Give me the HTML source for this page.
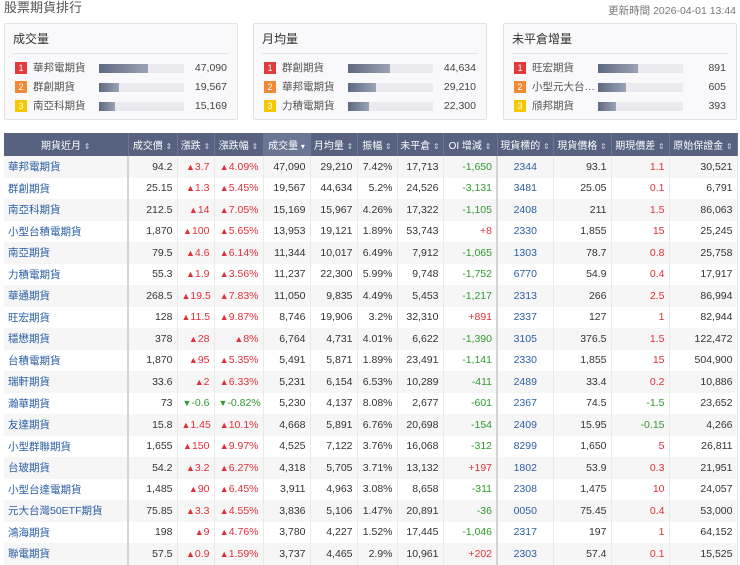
<!DOCTYPE html>
<html><head><meta charset="utf-8"><style>
*{box-sizing:border-box;margin:0;padding:0}
body{width:740px;height:565px;overflow:hidden;background:#fff;font-family:"Liberation Sans","Noto Sans CJK TC",sans-serif;color:#333;position:relative}
.title{position:absolute;left:4px;top:0;font-size:13px;color:#555;line-height:16px}
.upd{position:absolute;right:4px;top:3px;font-size:10.5px;color:#777}
.card{position:absolute;top:23px;width:234px;height:97px;border:1px solid #e2e2e2;background:#f9f9fb;border-radius:2px}
.card h3{position:absolute;left:8px;top:8px;font-size:12px;font-weight:normal;color:#333;line-height:14px}
.card .hr{position:absolute;left:8px;right:8px;top:29px;border-top:1px solid #e4e4e4}
.r{position:absolute;left:10px;right:10px;height:14px;font-size:10.5px;color:#555;line-height:14px}
.r span{line-height:14px}
.b{position:absolute;left:0;top:1px;width:12px;height:12px;color:#fff;font-size:9px;text-align:center;line-height:12px!important}
.n{position:absolute;left:18px;top:0;width:64px;white-space:nowrap;overflow:hidden;text-overflow:ellipsis}
.t{position:absolute;left:84px;top:3px;width:85px;height:9px;background:#ebebef}
.f{height:9px;background:linear-gradient(90deg,#5e6a82,#9aa3b5)}
.v{position:absolute;right:0;top:0;color:#444}
table{position:absolute;left:4px;top:133px;width:733px;border-collapse:collapse;table-layout:fixed;font-size:10.5px}
th{background:#56627f;color:#fff;font-weight:normal;height:23px;font-size:10px;border-right:1px solid #6c7792;white-space:nowrap;overflow:hidden}
th i{font-style:normal;font-size:8px;color:#cfd4de}
th.s{background:#6b7694}
td{height:21.5px;text-align:right;padding:0 4px;border-right:1px solid #eaeaea;white-space:nowrap;color:#333}
tr:nth-child(even) td{background:#f6f6f6}
td:first-child{text-align:left;color:#2a5fa5;border-right:2px solid #d4d4d4}
td:nth-child(9){border-right:2px solid #d4d4d4}
td:nth-child(10){text-align:center;color:#2a5fa5}
.u{color:#e0303a}.d{color:#2f9a2f}
.ar{font-size:9px}
</style></head><body>
<div class="title">股票期貨排行</div>
<div class="upd">更新時間 2026-04-01 13:44</div>

<div class="card" style="left:4px"><h3>成交量</h3><div class="hr"></div>
<div class="r" style="top:37px"><span class="b" style="background:#e33b3b">1</span><span class="n">華邦電期貨</span><span class="t"><div class="f" style="width:49px"></div></span><span class="v">47,090</span></div>
<div class="r" style="top:56px"><span class="b" style="background:#f08a35">2</span><span class="n">群創期貨</span><span class="t"><div class="f" style="width:20px"></div></span><span class="v">19,567</span></div>
<div class="r" style="top:75px"><span class="b" style="background:#f5c800">3</span><span class="n">南亞科期貨</span><span class="t"><div class="f" style="width:16px"></div></span><span class="v">15,169</span></div>
</div>
<div class="card" style="left:253px"><h3>月均量</h3><div class="hr"></div>
<div class="r" style="top:37px"><span class="b" style="background:#e33b3b">1</span><span class="n">群創期貨</span><span class="t"><div class="f" style="width:42px"></div></span><span class="v">44,634</span></div>
<div class="r" style="top:56px"><span class="b" style="background:#f08a35">2</span><span class="n">華邦電期貨</span><span class="t"><div class="f" style="width:28px"></div></span><span class="v">29,210</span></div>
<div class="r" style="top:75px"><span class="b" style="background:#f5c800">3</span><span class="n">力積電期貨</span><span class="t"><div class="f" style="width:21px"></div></span><span class="v">22,300</span></div>
</div>
<div class="card" style="left:503px"><h3>未平倉增量</h3><div class="hr"></div>
<div class="r" style="top:37px"><span class="b" style="background:#e33b3b">1</span><span class="n">旺宏期貨</span><span class="t"><div class="f" style="width:40px"></div></span><span class="v">891</span></div>
<div class="r" style="top:56px"><span class="b" style="background:#f08a35">2</span><span class="n">小型元大台灣50ETF期貨</span><span class="t"><div class="f" style="width:28px"></div></span><span class="v">605</span></div>
<div class="r" style="top:75px"><span class="b" style="background:#f5c800">3</span><span class="n">頎邦期貨</span><span class="t"><div class="f" style="width:18px"></div></span><span class="v">393</span></div>
</div>

<table>
<colgroup><col style="width:124px"><col style="width:49px"><col style="width:37px"><col style="width:49px"><col style="width:47px"><col style="width:47px"><col style="width:40px"><col style="width:46px"><col style="width:54px"><col style="width:56px"><col style="width:58px"><col style="width:58px"><col style="width:68px"></colgroup>
<tr><th>期貨近月 <i>⇕</i></th><th>成交價 <i>⇕</i></th><th>漲跌 <i>⇕</i></th><th>漲跌幅 <i>⇕</i></th><th class="s">成交量 <i style="color:#fff">▾</i></th><th>月均量 <i>⇕</i></th><th>振幅 <i>⇕</i></th><th>未平倉 <i>⇕</i></th><th>OI 增減 <i>⇕</i></th><th>現貨標的 <i>⇕</i></th><th>現貨價格 <i>⇕</i></th><th>期現價差 <i>⇕</i></th><th>原始保證金 <i>⇕</i></th></tr>
<tr><td>華邦電期貨</td><td>94.2</td><td class="u"><span class="ar">▲</span>3.7</td><td class="u"><span class="ar">▲</span>4.09%</td><td>47,090</td><td>29,210</td><td>7.42%</td><td>17,713</td><td class="d">-1,650</td><td>2344</td><td>93.1</td><td class="u">1.1</td><td>30,521</td></tr>
<tr><td>群創期貨</td><td>25.15</td><td class="u"><span class="ar">▲</span>1.3</td><td class="u"><span class="ar">▲</span>5.45%</td><td>19,567</td><td>44,634</td><td>5.2%</td><td>24,526</td><td class="d">-3,131</td><td>3481</td><td>25.05</td><td class="u">0.1</td><td>6,791</td></tr>
<tr><td>南亞科期貨</td><td>212.5</td><td class="u"><span class="ar">▲</span>14</td><td class="u"><span class="ar">▲</span>7.05%</td><td>15,169</td><td>15,967</td><td>4.26%</td><td>17,322</td><td class="d">-1,105</td><td>2408</td><td>211</td><td class="u">1.5</td><td>86,063</td></tr>
<tr><td>小型台積電期貨</td><td>1,870</td><td class="u"><span class="ar">▲</span>100</td><td class="u"><span class="ar">▲</span>5.65%</td><td>13,953</td><td>19,121</td><td>1.89%</td><td>53,743</td><td class="u">+8</td><td>2330</td><td>1,855</td><td class="u">15</td><td>25,245</td></tr>
<tr><td>南亞期貨</td><td>79.5</td><td class="u"><span class="ar">▲</span>4.6</td><td class="u"><span class="ar">▲</span>6.14%</td><td>11,344</td><td>10,017</td><td>6.49%</td><td>7,912</td><td class="d">-1,065</td><td>1303</td><td>78.7</td><td class="u">0.8</td><td>25,758</td></tr>
<tr><td>力積電期貨</td><td>55.3</td><td class="u"><span class="ar">▲</span>1.9</td><td class="u"><span class="ar">▲</span>3.56%</td><td>11,237</td><td>22,300</td><td>5.99%</td><td>9,748</td><td class="d">-1,752</td><td>6770</td><td>54.9</td><td class="u">0.4</td><td>17,917</td></tr>
<tr><td>華通期貨</td><td>268.5</td><td class="u"><span class="ar">▲</span>19.5</td><td class="u"><span class="ar">▲</span>7.83%</td><td>11,050</td><td>9,835</td><td>4.49%</td><td>5,453</td><td class="d">-1,217</td><td>2313</td><td>266</td><td class="u">2.5</td><td>86,994</td></tr>
<tr><td>旺宏期貨</td><td>128</td><td class="u"><span class="ar">▲</span>11.5</td><td class="u"><span class="ar">▲</span>9.87%</td><td>8,746</td><td>19,906</td><td>3.2%</td><td>32,310</td><td class="u">+891</td><td>2337</td><td>127</td><td class="u">1</td><td>82,944</td></tr>
<tr><td>穩懋期貨</td><td>378</td><td class="u"><span class="ar">▲</span>28</td><td class="u"><span class="ar">▲</span>8%</td><td>6,764</td><td>4,731</td><td>4.01%</td><td>6,622</td><td class="d">-1,390</td><td>3105</td><td>376.5</td><td class="u">1.5</td><td>122,472</td></tr>
<tr><td>台積電期貨</td><td>1,870</td><td class="u"><span class="ar">▲</span>95</td><td class="u"><span class="ar">▲</span>5.35%</td><td>5,491</td><td>5,871</td><td>1.89%</td><td>23,491</td><td class="d">-1,141</td><td>2330</td><td>1,855</td><td class="u">15</td><td>504,900</td></tr>
<tr><td>瑞軒期貨</td><td>33.6</td><td class="u"><span class="ar">▲</span>2</td><td class="u"><span class="ar">▲</span>6.33%</td><td>5,231</td><td>6,154</td><td>6.53%</td><td>10,289</td><td class="d">-411</td><td>2489</td><td>33.4</td><td class="u">0.2</td><td>10,886</td></tr>
<tr><td>瀚華期貨</td><td>73</td><td class="d"><span class="ar">▼</span>-0.6</td><td class="d"><span class="ar">▼</span>-0.82%</td><td>5,230</td><td>4,137</td><td>8.08%</td><td>2,677</td><td class="d">-601</td><td>2367</td><td>74.5</td><td class="d">-1.5</td><td>23,652</td></tr>
<tr><td>友達期貨</td><td>15.8</td><td class="u"><span class="ar">▲</span>1.45</td><td class="u"><span class="ar">▲</span>10.1%</td><td>4,668</td><td>5,891</td><td>6.76%</td><td>20,698</td><td class="d">-154</td><td>2409</td><td>15.95</td><td class="d">-0.15</td><td>4,266</td></tr>
<tr><td>小型群聯期貨</td><td>1,655</td><td class="u"><span class="ar">▲</span>150</td><td class="u"><span class="ar">▲</span>9.97%</td><td>4,525</td><td>7,122</td><td>3.76%</td><td>16,068</td><td class="d">-312</td><td>8299</td><td>1,650</td><td class="u">5</td><td>26,811</td></tr>
<tr><td>台玻期貨</td><td>54.2</td><td class="u"><span class="ar">▲</span>3.2</td><td class="u"><span class="ar">▲</span>6.27%</td><td>4,318</td><td>5,705</td><td>3.71%</td><td>13,132</td><td class="u">+197</td><td>1802</td><td>53.9</td><td class="u">0.3</td><td>21,951</td></tr>
<tr><td>小型台達電期貨</td><td>1,485</td><td class="u"><span class="ar">▲</span>90</td><td class="u"><span class="ar">▲</span>6.45%</td><td>3,911</td><td>4,963</td><td>3.08%</td><td>8,658</td><td class="d">-311</td><td>2308</td><td>1,475</td><td class="u">10</td><td>24,057</td></tr>
<tr><td>元大台灣50ETF期貨</td><td>75.85</td><td class="u"><span class="ar">▲</span>3.3</td><td class="u"><span class="ar">▲</span>4.55%</td><td>3,836</td><td>5,106</td><td>1.47%</td><td>20,891</td><td class="d">-36</td><td>0050</td><td>75.45</td><td class="u">0.4</td><td>53,000</td></tr>
<tr><td>鴻海期貨</td><td>198</td><td class="u"><span class="ar">▲</span>9</td><td class="u"><span class="ar">▲</span>4.76%</td><td>3,780</td><td>4,227</td><td>1.52%</td><td>17,445</td><td class="d">-1,046</td><td>2317</td><td>197</td><td class="u">1</td><td>64,152</td></tr>
<tr><td>聯電期貨</td><td>57.5</td><td class="u"><span class="ar">▲</span>0.9</td><td class="u"><span class="ar">▲</span>1.59%</td><td>3,737</td><td>4,465</td><td>2.9%</td><td>10,961</td><td class="u">+202</td><td>2303</td><td>57.4</td><td class="u">0.1</td><td>15,525</td></tr>
</table>
</body></html>
